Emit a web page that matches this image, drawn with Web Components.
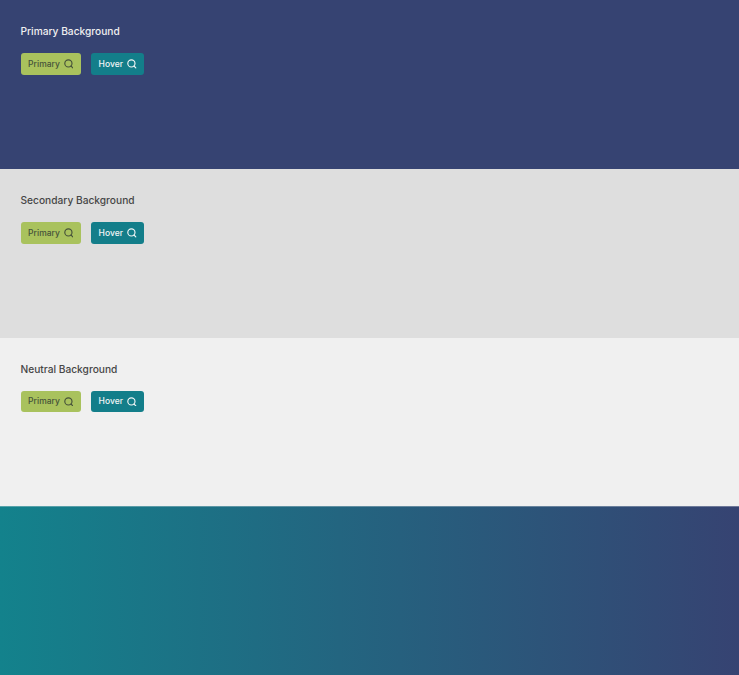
<!DOCTYPE html>
<html><head><meta charset="utf-8"><style>
html,body{margin:0;padding:0;height:100%}
body{font-family:"Inter","Liberation Sans",sans-serif}
#page{display:grid;grid-template-rows:repeat(4,1fr);height:675px}
</style></head><body>
<div id="page">
<sw-section tone="primary" label="Primary Background"></sw-section>
<sw-section tone="secondary" label="Secondary Background"></sw-section>
<sw-section tone="neutral" label="Neutral Background"></sw-section>
<sw-gradient></sw-gradient>
</div>
<template id="btn"><style>
:host{display:inline-flex;align-items:center;box-sizing:border-box;height:21.5px;border-radius:3px;padding:0 7.5px 0 7.5px;font:500 8.5px/22.5px Inter,"Liberation Sans",sans-serif;letter-spacing:.05px}
:host([kind=primary]){background:#a9c25d;color:#46523a;width:60px;justify-content:space-between}
:host([kind=hover]){background:#137e8a;color:#f2f6f6;width:53px;justify-content:space-between}
svg{width:9.5px;height:9.5px;flex:none;display:block}
</style><slot></slot><svg viewBox="0 0 9.5 9.5" fill="none" stroke="currentColor" stroke-width="1.15" stroke-linecap="round"><circle cx="4.4" cy="4.4" r="3.6"/><path d="M7 7 8.8 8.8"/></svg></template>
<template id="sec"><style>
:host{display:flex;flex-direction:column;padding:23px 20.5px 0;min-height:0;box-sizing:border-box;overflow:hidden}
:host([tone=primary]){background:#364372;color:#f0f0f0}
:host([tone=secondary]){background:#dedede;color:#464646}
:host([tone=neutral]){background:#f0f0f0;color:#464646}
h2{margin:0;font:500 10.2px/16px Inter,"Liberation Sans",sans-serif}
.row{display:flex;gap:10.5px;margin-top:14.3px}
</style><h2></h2><div class="row"><sw-button kind="primary">Primary</sw-button><sw-button kind="hover">Hover</sw-button></div></template>
<script>
const mount=(el,id)=>{const r=el.attachShadow({mode:"open"});r.appendChild(document.getElementById(id).content.cloneNode(true));return r};
customElements.define("sw-button",class extends HTMLElement{constructor(){super();mount(this,"btn")}});
customElements.define("sw-section",class extends HTMLElement{constructor(){super();this._r=mount(this,"sec")}connectedCallback(){this._r.querySelector("h2").textContent=this.getAttribute("label")}});
customElements.define("sw-gradient",class extends HTMLElement{constructor(){super();this.attachShadow({mode:"open"}).innerHTML='<style>:host{display:block;background:linear-gradient(rgba(240,240,240,.3),rgba(240,240,240,.3)) top/100% 1px no-repeat,linear-gradient(90deg,#13828c,#364372)}</style>'}});
</script>
</body></html>
